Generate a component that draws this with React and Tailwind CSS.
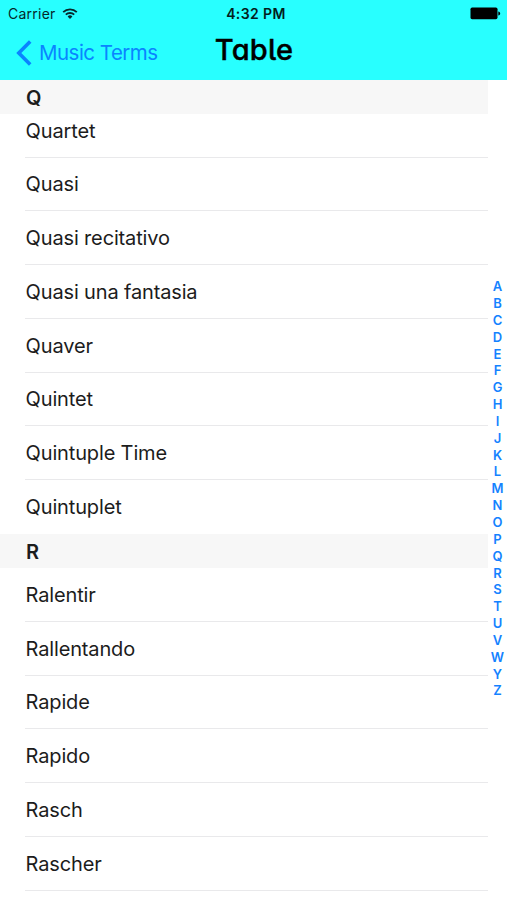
import React from 'react';

const SECTIONS = [
    {
        letter: 'Q',
        terms: [
            'Quartet',
            'Quasi',
            'Quasi recitativo',
            'Quasi una fantasia',
            'Quaver',
            'Quintet',
            'Quintuple Time',
            'Quintuplet',
        ],
    },
    {
        letter: 'R',
        terms: ['Ralentir', 'Rallentando', 'Rapide', 'Rapido', 'Rasch', 'Rascher'],
    },
];

// No terms start with X, so the index skips it
const INDEX = 'ABCDEFGHIJKLMNOPQRSTUVWYZ'.split('');

const WifiIcon = () => (
    <svg width="16" height="12" viewBox="0 0 16 12" fill="none" stroke="#06282b" strokeWidth="1.8">
        <path d="M1.2 4.1a9.6 9.6 0 0 1 13.6 0" />
        <path d="M3.8 6.7a6 6 0 0 1 8.4 0" />
        <path d="M8 11 5.6 8.5a3.5 3.5 0 0 1 4.8 0Z" fill="#06282b" stroke="none" />
    </svg>
);

const BatteryIcon = () => (
    <svg width="31" height="13" viewBox="0 0 31 13" fill="#000">
        <rect x="0.5" y="0.6" width="27" height="11.6" rx="1.6" />
        <path d="M28.3 4.4c1.2.3 1.9 1.1 1.9 2.1s-.7 1.8-1.9 2.1Z" />
    </svg>
);

const StatusBar = () => (
    <div className="grid h-[27px] grid-cols-[1fr_auto_1fr] items-center pl-2 pr-[6px]">
        <div className="flex items-center gap-[6px] text-[14px] tracking-[0.25px] text-[#06282b]">
            <span>Carrier</span>
            <WifiIcon />
        </div>
        <span className="pl-[3px] text-center text-[14px] font-semibold tracking-[0.4px] text-[#031d20]">4:32 PM</span>
        <div className="flex justify-end">
            <BatteryIcon />
        </div>
    </div>
);

const NavBar = () => (
    <div className="grid h-[52px] grid-cols-[1fr_auto_1fr] items-center px-4">
        <button className="flex items-center gap-[7px] text-[20.5px] tracking-[-0.52px] text-[#0a84ff]">
            <svg width="16" height="26" viewBox="0 0 16 26" fill="none" stroke="currentColor" strokeWidth="3.6">
                <path d="M14.2 1.6 2.8 13l11.4 11.4" />
            </svg>
            <span className="whitespace-nowrap">Music Terms</span>
        </button>
        <h1 className="pb-[7px] pl-px text-[29px] leading-none font-medium tracking-[0.2px] text-black [-webkit-text-stroke:0.4px_black] [font-feature-settings:'cv11','cv05']">
            Table
        </h1>
    </div>
);

const SectionHeader = ({ letter }) => (
    <h2 className="sticky top-0 z-10 flex h-[34px] items-center bg-[#f7f7f7] pl-[26px] pt-[2px] text-[20px] font-semibold text-[#1c1c1c]">
        {letter}
    </h2>
);

const TermRow = ({ term, last }) => (
    <li className="h-[53.8px] pl-[25px]">
        <div className={`flex h-full items-center border-b pl-[0.6px] pt-[0.8px] ${last ? 'border-transparent' : 'border-[#e9e9eb]'}`}>
            {term}
        </div>
    </li>
);

const App = () => (
    <div className="flex h-[900px] w-[507px] flex-col overflow-hidden bg-white font-['Inter',sans-serif]">
        <header className="h-[79.5px] shrink-0 bg-[#28ffff]">
            <StatusBar />
            <NavBar />
        </header>

        <div className="flex min-h-0 flex-1">
            <main className="w-[488px] overflow-hidden text-[20px] tracking-[-0.15px] text-[#1c1c1c]">
                {SECTIONS.map((section, i) => (
                    <section key={section.letter}>
                        <SectionHeader letter={section.letter} />
                        {/* first section is scrolled a little way under its header */}
                        <ul className={i === 0 ? '-mt-[9.8px]' : ''}>
                            {section.terms.map((term, j) => (
                                <TermRow
                                    key={term}
                                    term={term}
                                    last={i < SECTIONS.length - 1 && j === section.terms.length - 1}
                                />
                            ))}
                        </ul>
                    </section>
                ))}
            </main>
            <nav className="flex flex-1 flex-col items-center justify-center pb-[2px] text-[13px] font-semibold leading-[16.85px] text-[#1482ff]">
                {INDEX.map((letter) => (
                    <a key={letter}>{letter}</a>
                ))}
            </nav>
        </div>
    </div>
);

export default App;
